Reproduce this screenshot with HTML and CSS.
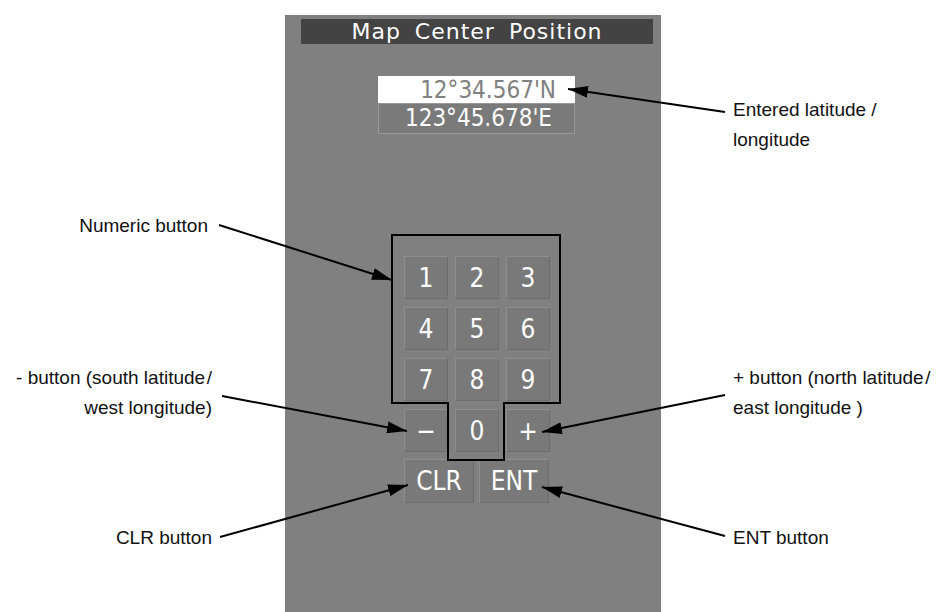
FILE: index.html
```html
<!DOCTYPE html>
<html lang="en">
<head>
<meta charset="utf-8">
<title>Map Center Position</title>
<link rel="stylesheet" href="styles.css">
</head>
<body>
<div class="figure">
  <div class="side side-left">
    <div class="lbl lbl-left lbl-numeric">Numeric button</div>
    <div class="lbl lbl-left lbl-minus">- button (south latitude&#8202;/<br>west longitude)</div>
    <div class="lbl lbl-left lbl-clr">CLR button</div>
  </div>
  <div class="panel">
    <div class="title">Map Center Position</div>
    <div class="coords">
      <div class="coord lat">12°34.567'N</div>
      <div class="coord lon">123°45.678'E</div>
    </div>
    <div class="keypad">
      <div class="key">1</div>
      <div class="key">2</div>
      <div class="key">3</div>
      <div class="key">4</div>
      <div class="key">5</div>
      <div class="key">6</div>
      <div class="key">7</div>
      <div class="key">8</div>
      <div class="key">9</div>
      <div class="key">&minus;</div>
      <div class="key">0</div>
      <div class="key">+</div>
    </div>
    <div class="keyrow">
      <div class="key key-wide">CLR</div>
      <div class="key key-wide">ENT</div>
    </div>
  </div>
  <div class="side side-right">
    <div class="lbl lbl-right lbl-entered">Entered latitude /<br>longitude</div>
    <div class="lbl lbl-right lbl-plus">+ button (north latitude&#8202;/<br>east longitude )</div>
    <div class="lbl lbl-right lbl-ent">ENT button</div>
  </div>
  <svg class="overlay" width="939" height="612" viewBox="0 0 939 612" xmlns="http://www.w3.org/2000/svg">
    <defs>
      <marker id="ah" viewBox="0 0 20 12" refX="20" refY="6" markerWidth="20" markerHeight="12" markerUnits="userSpaceOnUse" orient="auto">
        <path d="M0 0 L20 6 L0 12 Z" fill="#000"/>
      </marker>
    </defs>
    <path d="M392 235 H560 V403 H504 V460 H448 V403 H392 Z" fill="none" stroke="#000" stroke-width="2"/>
    <g stroke="#000" stroke-width="2" fill="none">
      <line x1="725" y1="112" x2="568" y2="89" marker-end="url(#ah)"/>
      <line x1="219" y1="225" x2="392" y2="280" marker-end="url(#ah)"/>
      <line x1="222" y1="396" x2="407" y2="431" marker-end="url(#ah)"/>
      <line x1="725" y1="395" x2="542" y2="432" marker-end="url(#ah)"/>
      <line x1="220" y1="537" x2="408" y2="485" marker-end="url(#ah)"/>
      <line x1="725" y1="536" x2="542" y2="487" marker-end="url(#ah)"/>
    </g>
  </svg>
</div>
</body>
</html>
```
FILE: styles.css
```css
html, body {
  margin: 0;
  padding: 0;
  background: #ffffff;
}

.figure {
  position: relative;
  width: 939px;
  height: 612px;
  display: grid;
  grid-template-columns: 285px 376px 278px;
  overflow: hidden;
  font-family: "Liberation Sans", Arial, sans-serif;
}

.side {
  position: relative;
}

.lbl {
  position: absolute;
  font-size: 19px;
  line-height: 30px;
  color: #111111;
  white-space: nowrap;
}

.lbl-left {
  right: 73px;
  text-align: right;
}

.lbl-right {
  left: 72px;
  text-align: left;
}

.lbl-numeric { top: 211px; right: 77px; }
.lbl-minus { top: 363px; }
.lbl-clr { top: 523px; }
.lbl-entered { top: 95px; }
.lbl-plus { top: 363px; }
.lbl-ent { top: 523px; }

.panel {
  margin-top: 15px;
  height: 597px;
  background: #808080;
  padding-top: 4px;
  box-sizing: border-box;
}

.title {
  margin: 0 8px 0 16px;
  height: 25px;
  background: #434343;
  color: #ffffff;
  font-family: "DejaVu Sans", sans-serif;
  font-size: 22px;
  letter-spacing: 1px;
  word-spacing: 6px;
  line-height: 25px;
  text-align: center;
}

.coords {
  margin: 32px 0 0 93px;
  width: 197px;
}

.coord {
  font-family: "DejaVu Sans Condensed", "DejaVu Sans", sans-serif;
  font-stretch: condensed;
  font-size: 24px;
  text-align: right;
  box-sizing: border-box;
}

.lat {
  height: 27px;
  line-height: 28px;
  background: #ffffff;
  color: #808080;
  padding-right: 19px;
}

.lon {
  height: 31px;
  line-height: 29px;
  background: #7a7a7a;
  border: 1px solid #979797;
  color: #ffffff;
  padding-right: 22px;
}

.keypad {
  margin: 122px 0 0 119px;
  display: grid;
  grid-template-columns: repeat(3, 44px);
  grid-auto-rows: 43px;
  column-gap: 7px;
  row-gap: 8px;
}

.key {
  box-sizing: border-box;
  background: #797979;
  border-top: 1px solid #8e8e8e;
  border-left: 1px solid #8e8e8e;
  border-right: 1px solid #6c6c6c;
  border-bottom: 1px solid #6c6c6c;
  color: #ffffff;
  font-family: "DejaVu Sans Condensed", "DejaVu Sans", sans-serif;
  font-stretch: condensed;
  font-size: 26px;
  display: flex;
  align-items: center;
  justify-content: center;
}

.keyrow {
  margin: 7px 0 0 119px;
  display: flex;
  column-gap: 5px;
}

.key-wide {
  width: 70px;
  height: 44px;
}

.overlay {
  position: absolute;
  left: 0;
  top: 0;
  pointer-events: none;
}
```
